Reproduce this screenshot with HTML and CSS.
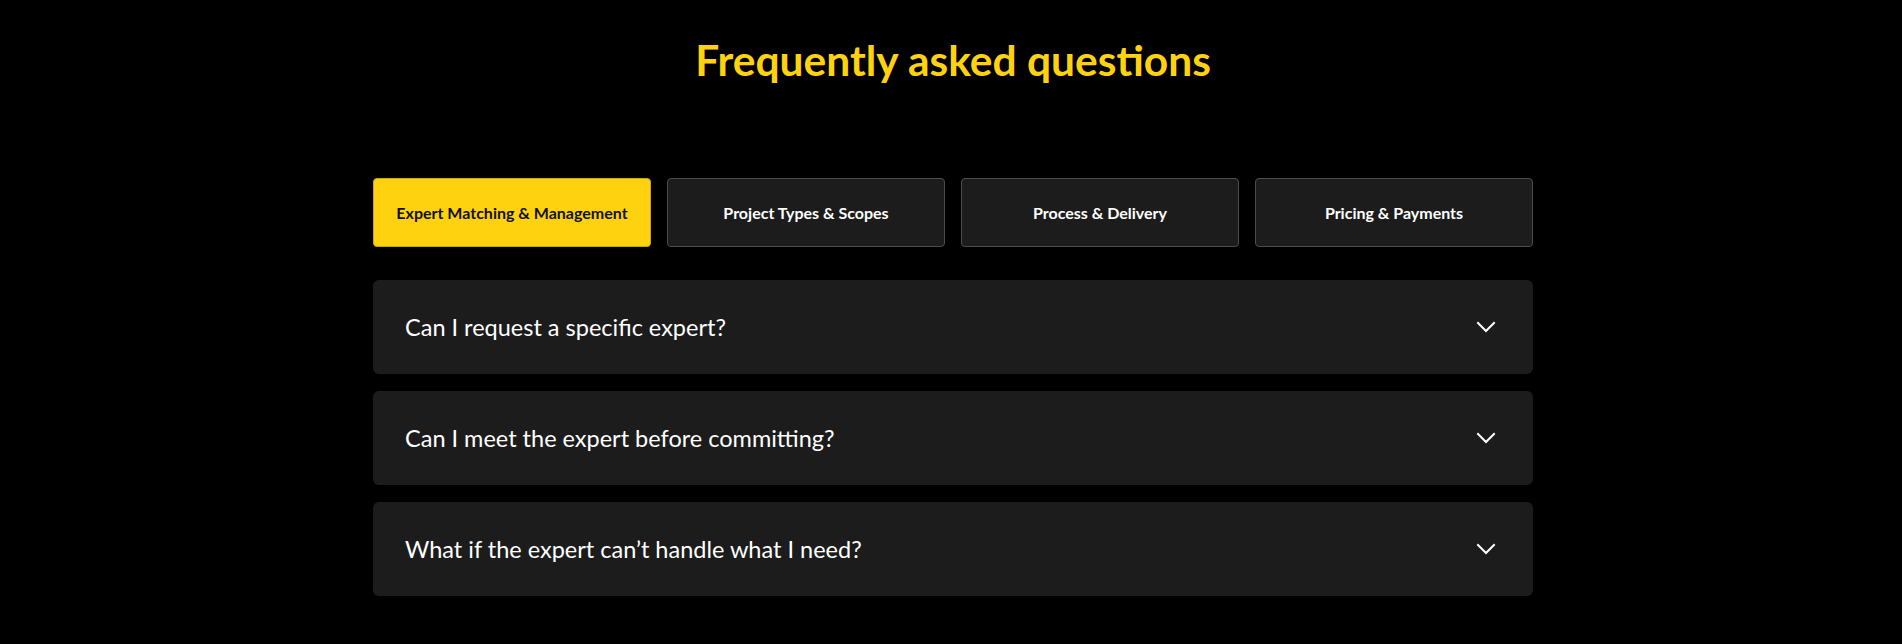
FILE: index.html
```html
<!DOCTYPE html>
<html lang="en">
<head>
<meta charset="utf-8">
<title>FAQ</title>
<link rel="stylesheet" href="styles.css">
</head>
<body>
<section class="faq">
  <h1 class="faq-title">Frequently asked questions</h1>
  <div class="tabs">
    <button class="tab tab-active">Expert Matching &amp; Management</button>
    <button class="tab">Project Types &amp; Scopes</button>
    <button class="tab">Process &amp; Delivery</button>
    <button class="tab">Pricing &amp; Payments</button>
  </div>
  <div class="items">
    <div class="item">
      <span class="q">Can I request a specific expert?</span>
      <svg class="chev" viewBox="0 0 24 24" width="24" height="24"><path d="M4 8l8 8 8-8" fill="none" stroke="#fff" stroke-width="2" stroke-linecap="square"/></svg>
    </div>
    <div class="item">
      <span class="q">Can I meet the expert before committing?</span>
      <svg class="chev" viewBox="0 0 24 24" width="24" height="24"><path d="M4 8l8 8 8-8" fill="none" stroke="#fff" stroke-width="2" stroke-linecap="square"/></svg>
    </div>
    <div class="item">
      <span class="q">What if the expert can’t handle what I need?</span>
      <svg class="chev" viewBox="0 0 24 24" width="24" height="24"><path d="M4 8l8 8 8-8" fill="none" stroke="#fff" stroke-width="2" stroke-linecap="square"/></svg>
    </div>
  </div>
</section>
</body>
</html>
```
FILE: styles.css
```css
html, body {
  margin: 0;
  padding: 0;
  background: #000;
}
body {
  font-family: Lato, "Open Sans", sans-serif;
  color: #fff;
  height: 644px;
  overflow: hidden;
}
.faq {
  width: 1160px;
  margin-left: calc(50% - 578px);
  padding-top: 34px;
}
.faq-title {
  margin: 0;
  text-align: center;
  font-size: 42.5px;
  line-height: 52px;
  font-weight: 700;
  color: #ffd20f;
}
.tabs {
  display: grid;
  grid-template-columns: repeat(4, 1fr);
  column-gap: 16px;
  margin-top: 92px;
}
.tab {
  height: 69px;
  box-sizing: border-box;
  border: 1px solid #4d4d4d;
  border-radius: 4px;
  background: #1c1c1c;
  color: #fff;
  font-family: Lato, sans-serif;
  font-weight: 700;
  font-size: 16px;
  line-height: 20px;
  padding: 0;
}
.tab-active {
  background: #ffd20f;
  border-color: #c9a800;
  color: #111;
}
.items {
  display: flex;
  flex-direction: column;
  gap: 17px;
  margin-top: 33px;
}
.item {
  height: 94px;
  box-sizing: border-box;
  background: #1c1c1c;
  border-radius: 6px;
  display: flex;
  align-items: center;
  justify-content: space-between;
  padding: 0 35px 0 32px;
}
.q {
  font-size: 23.5px;
  line-height: 1.2;
  font-weight: 400;
}
.chev {
  display: block;
}
```
